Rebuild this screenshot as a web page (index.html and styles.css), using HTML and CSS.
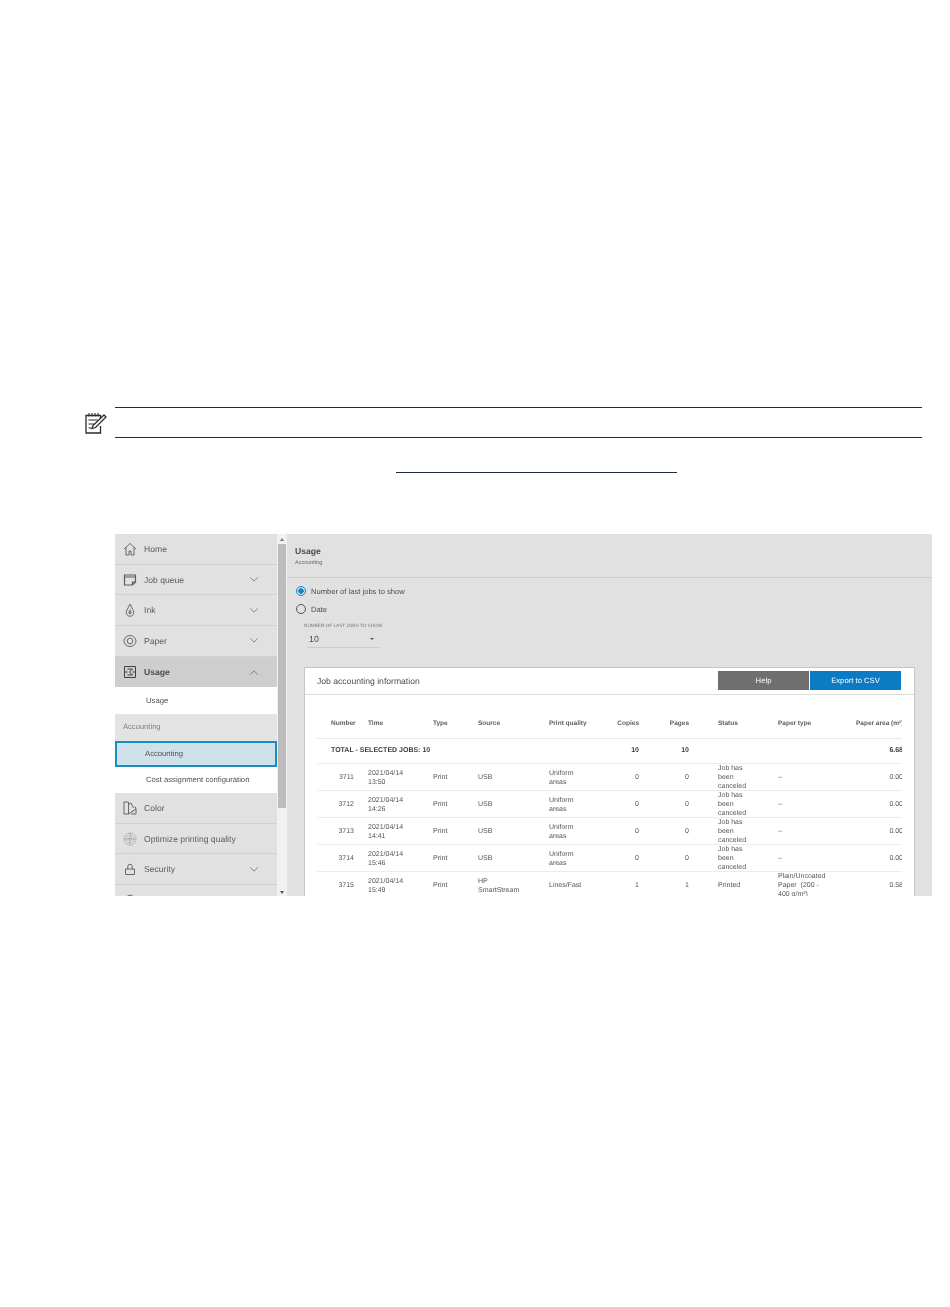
FILE: index.html
```html
<!DOCTYPE html>
<html lang="en">
<head>
<meta charset="utf-8">
<title>Job accounting</title>
<link rel="stylesheet" href="styles.css">
</head>
<body>
<main class="doc">
  <section class="note">
    <svg class="note-icon" viewBox="0 0 24 22" fill="none" stroke="#2a2a2a" stroke-width="1.300">
      <path d="M16.500 9V3.500H2V21h14.500v-7"/>
      <path d="M5 1v3.500M8 1v3.500M11 1v3.500M14 1v3.500" stroke-width="1.100"/>
      <path d="M4.500 8h9M4.500 12h6M4.500 16h3" stroke-width="1"/>
      <path d="M8 16.500l1-3L20 3l2 2-10.500 10.500z" fill="#fff"/>
    </svg>
    <div class="note-body"></div>
  </section>
  <div class="link-line"></div>
  <figure class="shot">
    <nav class="side">
      <div class="item">
        <svg class="ico" viewBox="0 0 14 14"><path d="M1 7l6-5.500L13 7M3 5.500V13h3V9h2v4h3V5.500"/></svg>
        <span class="label">Home</span>
      </div>
      <div class="item">
        <svg class="ico" viewBox="0 0 14 14"><path d="M1.500 2h11v7l-3 3h-8zM1.500 4h11M9.500 12V9h3" stroke-width="1.200"/></svg>
        <span class="label">Job queue</span>
        <svg class="chev" viewBox="0 0 10 6"><path d="M.5.500L5 5 9.500.5"/></svg>
      </div>
      <div class="item">
        <svg class="ico" viewBox="0 0 14 14"><path d="M7 1L3.500 8a3.800 3.800 0 1 0 7 0zM7 6.500v4"/><circle cx="7" cy="9.500" r="1.200"/></svg>
        <span class="label">Ink</span>
        <svg class="chev" viewBox="0 0 10 6"><path d="M.5.500L5 5 9.500.5"/></svg>
      </div>
      <div class="item">
        <svg class="ico" viewBox="0 0 14 14"><ellipse cx="7" cy="7" rx="6" ry="5.500"/><circle cx="7" cy="7" r="2.800"/></svg>
        <span class="label">Paper</span>
        <svg class="chev" viewBox="0 0 10 6"><path d="M.5.500L5 5 9.500.5"/></svg>
      </div>
      <div class="item item-open">
        <svg class="ico ico-dark" viewBox="0 0 14 14"><path d="M1.500 1.500h11v11h-11zM4.500 4h5L6.500 7l3 3h-5M1.500 7h3M9.500 7h3"/></svg>
        <span class="label label-strong">Usage</span>
        <svg class="chev" viewBox="0 0 10 6"><path d="M.5 5.500L5 1l4.500 4.500"/></svg>
      </div>
      <div class="sub">Usage</div>
      <div class="group">Accounting</div>
      <div class="sub sub-selected">Accounting</div>
      <div class="sub sub-last">Cost assignment configuration</div>
      <div class="item">
        <svg class="ico" viewBox="0 0 14 14"><path d="M1 1h4.500v12H1zM5.500 3.500L8 2l2.500 5M5.500 13l7.500-5-1-2.500M8 13h5V8M8.500 11l2-1.500"/></svg>
        <span class="label">Color</span>
      </div>
      <div class="item">
        <svg class="ico ico-faint" viewBox="0 0 14 14" stroke-dasharray="1.500 .8"><circle cx="7" cy="7" r="6"/><circle cx="7" cy="7" r="3.800"/><circle cx="7" cy="7" r="1.500"/><path d="M1 7h12M7 1v12"/></svg>
        <span class="label">Optimize printing quality</span>
      </div>
      <div class="item">
        <svg class="ico" viewBox="0 0 14 14"><path d="M2.500 7h9v5.500h-9zM4.800 7V4.500a2.200 2.200 0 0 1 4.400 0V7"/></svg>
        <span class="label">Security</span>
        <svg class="chev" viewBox="0 0 10 6"><path d="M.5.500L5 5 9.500.5"/></svg>
      </div>
      <div class="item">
        <svg class="ico" viewBox="0 0 14 14"><circle cx="7" cy="5" r="3"/></svg>
      </div>
    </nav>
    <div class="scrollbar">
      <span class="arrow arrow-up"></span>
      <span class="thumb"></span>
      <span class="arrow arrow-down"></span>
    </div>
    <div class="content">
      <header class="head">
        <h1 class="head-title">Usage</h1>
        <p class="head-sub">Accounting</p>
      </header>
      <div class="filters">
        <div class="radio-row">
          <span class="radio radio-on"></span>
          <span>Number of last jobs to show</span>
        </div>
        <div class="radio-row">
          <span class="radio"></span>
          <span>Date</span>
        </div>
        <div class="field-label">NUMBER OF LAST JOBS TO SHOW</div>
        <div class="select"><span>10</span><span class="caret"></span></div>
      </div>
      <section class="card">
        <div class="card-head">
          <h2 class="card-title">Job accounting information</h2>
          <div class="btns">
            <span class="btn btn-gray">Help</span>
            <span class="btn btn-blue">Export to CSV</span>
          </div>
        </div>
        <div class="table-wrap">
          <table class="jobs">
            <colgroup>
              <col class="c-num"><col class="c-time"><col class="c-type"><col class="c-src"><col class="c-q"><col class="c-copies"><col class="c-pages"><col class="c-status"><col class="c-paper"><col class="c-area">
            </colgroup>
            <thead>
              <tr>
                <th class="first">Number</th><th>Time</th><th>Type</th><th>Source</th><th>Print quality</th><th class="r">Copies</th><th class="r">Pages</th><th class="st">Status</th><th>Paper type</th><th class="r">Paper area (m²)</th>
              </tr>
            </thead>
            <tbody>
              <tr class="total">
                <td colspan="5" class="first">TOTAL - SELECTED JOBS: 10</td><td class="r">10</td><td class="r">10</td><td></td><td></td><td class="r">6.68</td>
              </tr>
              <tr>
                <td class="r">3711</td><td>2021/04/14<br>13:50</td><td>Print</td><td>USB</td><td>Uniform<br>areas</td><td class="r">0</td><td class="r">0</td><td class="st"><div class="stack">Job has<br>been<br>canceled</div></td><td>--</td><td class="r">0.00</td>
              </tr>
              <tr>
                <td class="r">3712</td><td>2021/04/14<br>14:26</td><td>Print</td><td>USB</td><td>Uniform<br>areas</td><td class="r">0</td><td class="r">0</td><td class="st"><div class="stack">Job has<br>been<br>canceled</div></td><td>--</td><td class="r">0.00</td>
              </tr>
              <tr>
                <td class="r">3713</td><td>2021/04/14<br>14:41</td><td>Print</td><td>USB</td><td>Uniform<br>areas</td><td class="r">0</td><td class="r">0</td><td class="st"><div class="stack">Job has<br>been<br>canceled</div></td><td>--</td><td class="r">0.00</td>
              </tr>
              <tr>
                <td class="r">3714</td><td>2021/04/14<br>15:46</td><td>Print</td><td>USB</td><td>Uniform<br>areas</td><td class="r">0</td><td class="r">0</td><td class="st"><div class="stack">Job has<br>been<br>canceled</div></td><td>--</td><td class="r">0.00</td>
              </tr>
              <tr>
                <td class="r">3715</td><td>2021/04/14<br>15:49</td><td>Print</td><td>HP<br>SmartStream</td><td>Lines/Fast</td><td class="r">1</td><td class="r">1</td><td class="st">Printed</td><td><div class="stack">Plain/Uncoated<br>Paper &nbsp;(200 -<br>400 g/m²)</div></td><td class="r">0.58</td>
              </tr>
            </tbody>
          </table>
        </div>
      </section>
    </div>
  </figure>
</main>
</body>
</html>
```

FILE: styles.css
```css
html, body {
  margin: 0;
  padding: 0;
  background: #fff;
}

body {
  font-family: "Liberation Sans", Arial, sans-serif;
  color: #444;
  min-height: 1307px;
  text-rendering: geometricPrecision;
}

.doc {
  padding-top: 407px;
}

.note {
  display: flex;
  align-items: center;
  padding-left: 84px;
  padding-right: 28px;
}

.note-icon {
  width: 24px;
  height: 22px;
  margin-right: 7px;
  flex: none;
  filter: blur(0.3px);
}

.note-body {
  flex: 1;
  height: 29px;
  border-top: 1px solid #1e2a44;
  border-bottom: 1px solid #1e2a44;
}

.link-line {
  width: 281px;
  height: 1px;
  margin: 34px 0 0 396px;
  background: #1e2a44;
}

.shot {
  display: flex;
  width: 817px;
  height: 362px;
  margin: 61px 0 0 115px;
  overflow: hidden;
  background: #f1f1f1;
  filter: blur(0.35px);
}

/* side menu */
.side {
  width: 162px;
  flex: none;
  background: #e1e1e1;
}

.item {
  display: flex;
  align-items: center;
  height: 30.700px;
  box-sizing: border-box;
  padding-left: 8px;
  border-bottom: 1px solid #d2d2d2;
  font-size: 8.600px;
  color: #5c5c5c;
}

.item-open {
  background: #cecece;
  border-bottom: 0;
}

.ico {
  width: 14px;
  height: 14px;
  flex: none;
  fill: none;
  stroke: #5c5c5c;
  stroke-width: 0.9;
}

.ico-dark {
  stroke: #333;
}

.ico-faint {
  stroke: #9a9a9a;
}

.label {
  margin-left: 7px;
  flex: 1;
  white-space: nowrap;
}

.label-strong {
  font-weight: 700;
  color: #4c4c4c;
}

.chev {
  width: 10px;
  height: 5px;
  margin-right: 18px;
  flex: none;
  fill: none;
  stroke: #666;
  stroke-width: 0.9;
}

.sub {
  display: flex;
  align-items: center;
  height: 26.200px;
  box-sizing: border-box;
  padding: 0 0 1px 31px;
  background: #fff;
  font-size: 7.700px;
  color: #505050;
  white-space: nowrap;
}

.sub-selected {
  background: #cfe2ea;
  border: 2px solid #1b8dc0;
  padding: 0 0 1px 28px;
}

.sub-last {
  padding-bottom: 0;
}

.group {
  display: flex;
  align-items: center;
  box-sizing: border-box;
  height: 27px;
  padding: 0 0 1px 8px;
  background: #e3e3e3;
  font-size: 7.600px;
  color: #808080;
}

.scrollbar {
  position: relative;
  width: 8px;
  margin: 0 1px;
  flex: none;
  background: #f1f1f1;
}

.thumb {
  position: absolute;
  top: 10px;
  left: 0;
  width: 8px;
  height: 264px;
  background: #bcbcbc;
}

.arrow {
  position: absolute;
  left: 2px;
  width: 0;
  height: 0;
  border-left: 2px solid transparent;
  border-right: 2px solid transparent;
}

.arrow-up {
  top: 4px;
  border-bottom: 3px solid #777;
}

.arrow-down {
  bottom: 2px;
  border-top: 3px solid #555;
}

/* main panel */
.content {
  flex: 1;
  min-width: 0;
  background: #e1e1e1;
  border-top-right-radius: 3px;
}

.head {
  height: 44px;
  box-sizing: border-box;
  padding: 12px 0 0 8px;
  border-bottom: 1px solid #cfcfcf;
}

.head-title {
  margin: 0;
  font-size: 8.600px;
  line-height: 11px;
  font-weight: 700;
  color: #4c4c4c;
}

.head-sub {
  margin: 2px 0 0;
  font-size: 5.500px;
  line-height: 8px;
  color: #666;
}

.filters {
  padding: 4px 0 0 9px;
}

.radio-row {
  display: flex;
  align-items: center;
  gap: 5px;
  height: 18px;
  font-size: 7.600px;
  color: #4c4c4c;
}

.radio {
  width: 10px;
  height: 10px;
  box-sizing: border-box;
  border: 1px solid #555;
  border-radius: 50%;
}

.radio-on {
  border-color: #1b84c0;
  background: radial-gradient(circle, #1b84c0 0 2.500px, #d5e4ec 3px);
}

.field-label {
  margin: 4px 0 0 8px;
  font-size: 4.700px;
  line-height: 7px;
  color: #777;
}

.select {
  display: flex;
  align-items: center;
  justify-content: space-between;
  width: 65px;
  height: 16px;
  margin: 2px 0 0 12px;
  padding: 0 5px 0 1px;
  border-bottom: 1px solid #cacaca;
  font-size: 8.800px;
  color: #4c4c4c;
}

.caret {
  width: 0;
  height: 0;
  border-left: 2px solid transparent;
  border-right: 2px solid transparent;
  border-top: 2px solid #555;
}

.card {
  width: 611px;
  height: 240px;
  margin: 19px 0 0 17px;
  box-sizing: border-box;
  border: 1px solid #c6c6c6;
  border-bottom: 0;
  background: #fff;
}

.card-head {
  display: flex;
  align-items: center;
  justify-content: space-between;
  height: 26px;
  padding: 0 13px 0 12px;
  border-bottom: 1px solid #dcdcdc;
}

.card-title {
  margin: 0 0 1px;
  font-size: 8.600px;
  font-weight: 400;
  color: #4c4c4c;
}

.btns {
  display: flex;
  gap: 1px;
  margin-bottom: 2px;
}

.btn {
  display: flex;
  align-items: center;
  justify-content: center;
  width: 91px;
  height: 19px;
  font-size: 7.700px;
  color: #fff;
}

.btn-gray {
  background: #6f6f6f;
}

.btn-blue {
  background: #0d7bc4;
}

.table-wrap {
  width: 585px;
  margin-left: 12px;
  overflow: hidden;
}

.jobs {
  width: 590px;
  table-layout: fixed;
  border-collapse: collapse;
  font-size: 7px;
  line-height: 9px;
  color: #555;
}

.c-num { width: 44px; }
.c-time { width: 65px; }
.c-type { width: 45px; }
.c-src { width: 71px; }
.c-q { width: 68px; }
.c-copies { width: 36px; }
.c-pages { width: 50px; }
.c-status { width: 75px; }
.c-paper { width: 78px; }
.c-area { width: 58px; }

.jobs th {
  height: 43px;
  padding: 14px 7px 0 7px;
  box-sizing: border-box;
  text-align: left;
  font-size: 6.500px;
  font-weight: 700;
  color: #5c5c5c;
  white-space: nowrap;
  border-bottom: 1px solid #e9e9e9;
}

.jobs td {
  height: 27px;
  padding: 2px 7px 0;
  box-sizing: border-box;
  border-bottom: 1px solid #ececec;
  white-space: nowrap;
}

.jobs td:last-child {
  padding-right: 4px;
}

.stack {
  margin: -2px 0;
}

.jobs .first {
  padding-left: 14px;
  padding-right: 0;
}

.jobs .r {
  text-align: right;
}

.jobs .st {
  padding-left: 22px;
}

.jobs .total td {
  height: 25px;
  padding-top: 0;
  font-weight: 700;
  font-size: 7px;
  color: #3c3c3c;
}
```
